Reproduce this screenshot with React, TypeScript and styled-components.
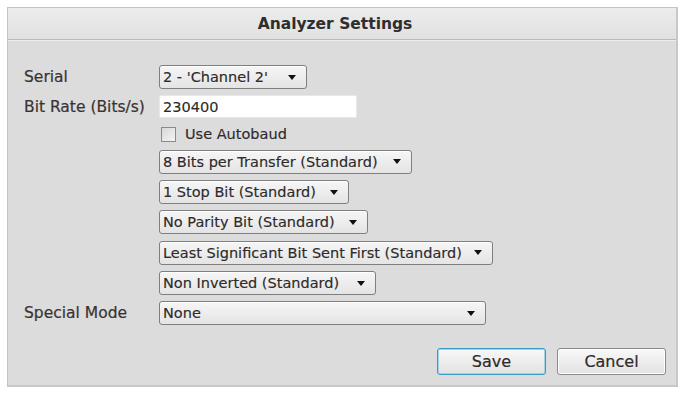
import React from "react";
import styled, { createGlobalStyle } from "styled-components";

const GlobalStyle = createGlobalStyle`
  html, body {
    margin: 0;
    padding: 0;
    background: #ffffff;
  }
  body {
    font-family: "DejaVu Sans", Verdana, sans-serif;
    color: #333;
  }
`;

const rows = [
  "8 Bits per Transfer (Standard)",
  "1 Stop Bit (Standard)",
  "No Parity Bit (Standard)",
  "Least Significant Bit Sent First (Standard)",
  "Non Inverted (Standard)",
];

const widths = [253, 190, 209, 334, 217];

const Combo = ({ value, width }: { value: string; width: number }) => (
  <ComboBox style={{ width }}>
    <ComboText>{value}</ComboText>
    <Arrow />
  </ComboBox>
);

const App = () => {
  return (
    <>
      <GlobalStyle />
      <Dialog>
        <Header>Analyzer Settings</Header>
        <Body>
          <Form>
            <Label>Serial</Label>
            <Combo value="2 - 'Channel 2'" width={148} />

            <Label>Bit Rate (Bits/s)</Label>
            <TextInput>230400</TextInput>

            <span />
            <CheckRow>
              <CheckBox />
              <CheckText>Use Autobaud</CheckText>
            </CheckRow>

            {rows.map((r, i) => (
              <React.Fragment key={r}>
                <span />
                <Combo value={r} width={widths[i]} />
              </React.Fragment>
            ))}

            <Label>Special Mode</Label>
            <Combo value="None" width={327} />
          </Form>
          <Buttons>
            <Button $primary>Save</Button>
            <Button>Cancel</Button>
          </Buttons>
        </Body>
      </Dialog>
    </>
  );
};

export default App;

const Dialog = styled.div`
  display: flex;
  flex-direction: column;
  margin: 7px 0 0 7px;
  width: 671px;
  height: 380px;
  box-sizing: border-box;
  border: 1px solid #c4c4c4;
  border-right: 2px solid #c8c8c8;
  border-bottom: 2px solid #c8c8c8;
  background: #dcdcdc;
`;

const Header = styled.div`
  display: flex;
  align-items: center;
  justify-content: center;
  height: 31px;
  padding-right: 14px;
  border-bottom: 1px solid #b9b9b9;
  box-shadow: 0 1px 0 #ececec;
  background: linear-gradient(#ececec, #e1e1e1);
  font-size: 15.5px;
  font-weight: bold;
  color: #2e2e2e;
`;

const Body = styled.div`
  flex: 1;
  display: flex;
  flex-direction: column;
  justify-content: space-between;
  padding: 25px 10px 10px 16px;
`;

const Form = styled.div`
  display: grid;
  grid-template-columns: 135px auto;
  justify-items: start;
  align-items: center;
  row-gap: 6.3px;
`;

const Label = styled.div`
  font-size: 15.5px;
  color: #3a3232;
  -webkit-text-stroke: 0.2px #3a3232;
  white-space: nowrap;
`;

const ComboBox = styled.div`
  display: flex;
  align-items: center;
  justify-content: space-between;
  height: 24px;
  box-sizing: border-box;
  padding: 0 10px 0 3px;
  border: 1px solid #7f7f7f;
  border-radius: 3px;
  background: linear-gradient(#f6f6f6, #e4e4e4);
  box-shadow: inset 0 1px 0 #ffffff;
`;

const ComboText = styled.span`
  font-size: 14.5px;
  color: #2e2a2a;
  -webkit-text-stroke: 0.15px #2e2a2a;
  white-space: nowrap;
`;

const Arrow = styled.span`
  width: 0;
  height: 0;
  border-left: 4px solid transparent;
  border-right: 4px solid transparent;
  border-top: 5px solid #111;
`;

const TextInput = styled.div`
  display: flex;
  align-items: center;
  width: 198px;
  height: 23px;
  box-sizing: border-box;
  padding: 0 3px;
  background: #ffffff;
  border: 1px solid #e8e8e8;
  font-size: 14.5px;
  color: #2e2a2a;
  -webkit-text-stroke: 0.15px #2e2a2a;
`;

const CheckRow = styled.div`
  display: flex;
  align-items: center;
  gap: 9px;
  height: 19px;
  padding-left: 2px;
`;

const CheckBox = styled.span`
  width: 15px;
  height: 15px;
  box-sizing: border-box;
  border: 1px solid #8a8a8a;
  background: linear-gradient(135deg, #d8d8d8, #f4f4f4);
`;

const CheckText = styled.span`
  font-size: 14.5px;
  color: #2e2a2a;
  -webkit-text-stroke: 0.15px #2e2a2a;
`;

const Buttons = styled.div`
  display: flex;
  justify-content: flex-end;
  gap: 11px;
`;

const Button = styled.div<{ $primary?: boolean }>`
  display: flex;
  align-items: center;
  justify-content: center;
  width: 109px;
  height: 27px;
  box-sizing: border-box;
  border: 1px solid ${(p) => (p.$primary ? "#3a9cc4" : "#8a8a8a")};
  border-radius: 3px;
  background: linear-gradient(#f8f8f8, #e2e2e2);
  box-shadow: inset 0 0 0 1px ${(p) => (p.$primary ? "#9fd3ea" : "#ffffff")};
  font-size: 16px;
  color: #2e2a2a;
  -webkit-text-stroke: 0.2px #2e2a2a;
`;
